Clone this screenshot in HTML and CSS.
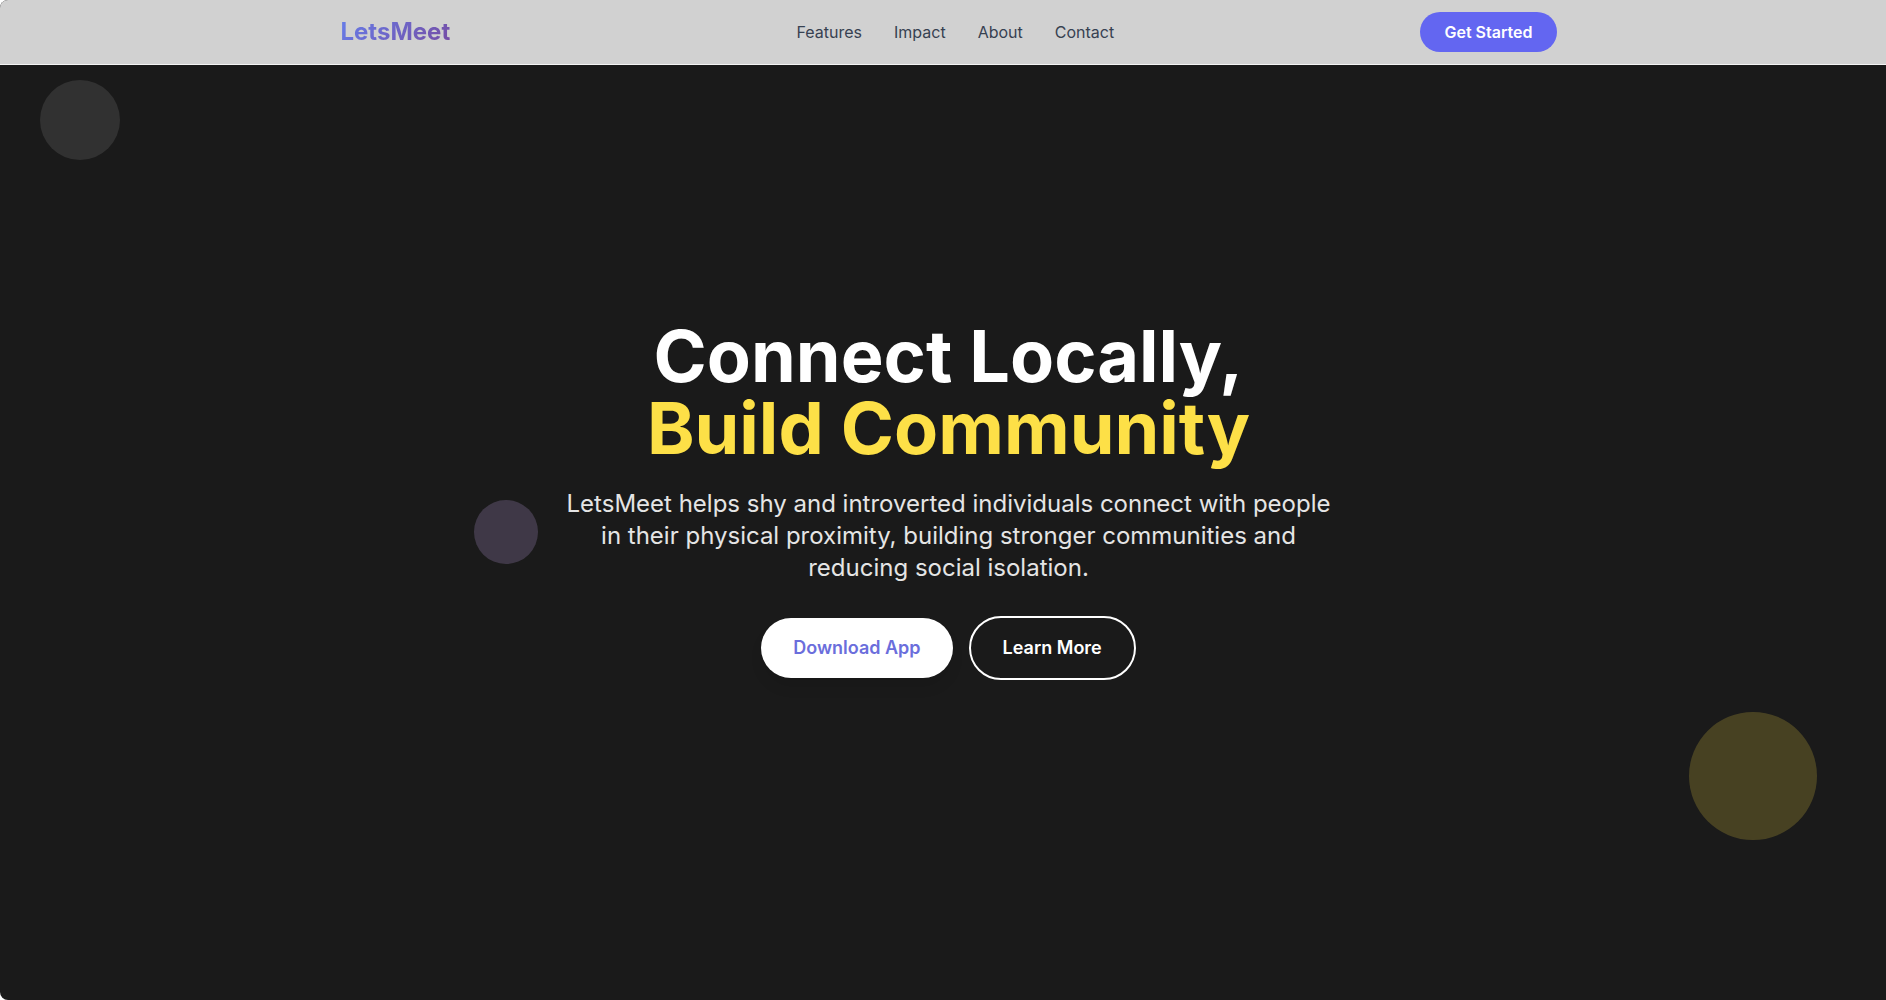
FILE: index.html
```html
<!DOCTYPE html>
<html lang="en">
<head>
    <meta charset="UTF-8">
    <meta name="viewport" content="width=device-width, initial-scale=1.0">
    <title>LetsMeet - Connect Locally, Build Community</title>
    <link rel="stylesheet" href="styles.css">
</head>
<body>
    <div class="page">
        <!-- Navigation -->
        <header class="navbar">
            <div class="nav-container">
                <a href="#home" class="logo">LetsMeet</a>
                <nav class="nav-links">
                    <a href="#features">Features</a>
                    <a href="#impact">Impact</a>
                    <a href="#about">About</a>
                    <a href="#contact">Contact</a>
                </nav>
                <button type="button" class="btn-start">Get Started</button>
            </div>
        </header>

        <!-- Hero -->
        <main class="hero" id="home">
            <div class="circle circle-white"></div>
            <div class="circle circle-yellow"></div>
            <div class="circle circle-purple"></div>

            <div class="hero-content">
                <h1>Connect Locally, <span class="highlight">Build Community</span></h1>
                <p>LetsMeet helps shy and introverted individuals connect with people in their physical proximity, building stronger communities and reducing social isolation.</p>
                <div class="hero-buttons">
                    <button type="button" class="btn btn-primary">Download App</button>
                    <button type="button" class="btn btn-outline">Learn More</button>
                </div>
            </div>
        </main>
    </div>
</body>
</html>
```

FILE: styles.css
```css
* {
    margin: 0;
    padding: 0;
    box-sizing: border-box;
}

body {
    font-family: "Inter", sans-serif;
    font-size: 16px;
    line-height: 24px;
    background: #fff;
    overflow: hidden;
}

a {
    text-decoration: none;
}

button {
    font-family: inherit;
    border: none;
    cursor: pointer;
}

.page {
    position: relative;
    margin-right: -11px;
    background: #1a1a1a;
    border-radius: 8px;
    overflow: hidden;
}

/* Navigation */
.navbar {
    position: absolute;
    top: 0;
    left: 0;
    right: 0;
    z-index: 10;
    background: #d1d1d1;
    border-bottom: 1px solid #f4f4f4;
}

.nav-container {
    display: flex;
    justify-content: space-between;
    align-items: center;
    max-width: 1280px;
    height: 64px;
    margin: 0 auto;
    padding: 0 32px;
}

.logo {
    font-size: 24px;
    font-weight: 700;
    line-height: 32px;
    background: linear-gradient(135deg, #667eea 0%, #764ba2 100%);
    -webkit-background-clip: text;
    background-clip: text;
    color: transparent;
}

.nav-links {
    display: flex;
    gap: 32px;
    margin-left: 40px;
}

.nav-links a {
    color: #374151;
}

.btn-start {
    padding: 8px 24px;
    font-size: 16px;
    font-weight: 600;
    line-height: 24px;
    color: #fff;
    background: #6366f1;
    border-radius: 20px;
}

/* Hero */
.hero {
    position: relative;
    display: flex;
    justify-content: center;
    align-items: center;
    min-height: 100vh;
}

.hero-content {
    max-width: 768px;
    text-align: center;
}

.hero h1 {
    margin-bottom: 24px;
    font-size: 72px;
    font-weight: 700;
    line-height: 72px;
    color: #fff;
}

.highlight {
    display: block;
    color: #fde047;
}

.hero p {
    margin-bottom: 32px;
    font-size: 24px;
    line-height: 32px;
    color: #e5e5e5;
}

.hero-buttons {
    display: flex;
    justify-content: center;
    align-items: center;
    gap: 16px;
}

.btn {
    padding: 16px 32px;
    font-size: 18px;
    font-weight: 600;
    line-height: 28px;
    border-radius: 32px;
}

.btn-primary {
    color: #6b6edc;
    background: #fff;
    box-shadow: 0 10px 15px -3px rgba(0, 0, 0, 0.1);
}

.btn-outline {
    color: #fff;
    background: transparent;
    border: 2px solid #fff;
}

/* Floating circles */
.circle {
    position: absolute;
    border-radius: 50%;
}

.circle-white {
    top: 80px;
    left: 40px;
    width: 80px;
    height: 80px;
    background: rgba(255, 255, 255, 0.1);
}

.circle-yellow {
    bottom: 160px;
    right: 80px;
    width: 128px;
    height: 128px;
    background: rgba(253, 224, 71, 0.2);
}

.circle-purple {
    top: 50%;
    left: 25%;
    width: 64px;
    height: 64px;
    background: rgba(216, 180, 254, 0.2);
}
```
